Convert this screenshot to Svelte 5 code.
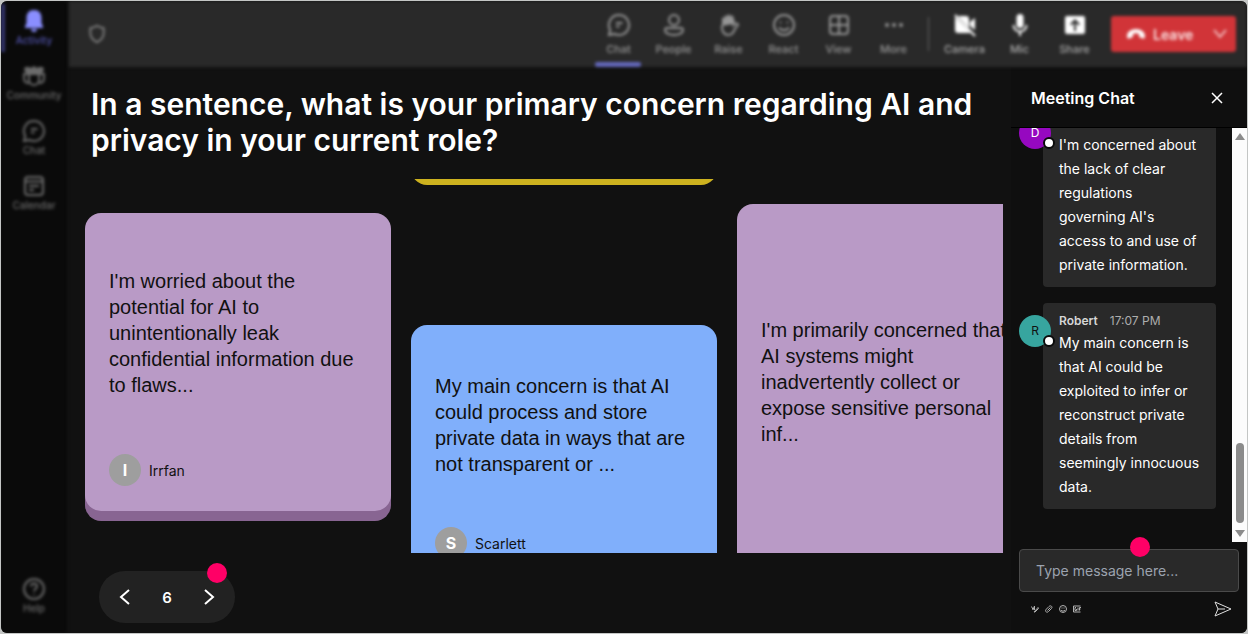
<script>
  let page = 6;
  let draft = "";

  const railItems = [
    { name: "Activity", icon: "bell" },
    { name: "Community", icon: "community" },
    { name: "Chat", icon: "chat" },
    { name: "Calendar", icon: "calendar" },
  ];

  const viewTools = [
    { name: "Chat", icon: "chat" },
    { name: "People", icon: "person" },
    { name: "Raise", icon: "hand" },
    { name: "React", icon: "smile" },
    { name: "View", icon: "grid" },
    { name: "More", icon: "more" },
  ];

  const deviceTools = [
    { name: "Camera", icon: "camera" },
    { name: "Mic", icon: "mic" },
    { name: "Share", icon: "share" },
  ];

  const columns = [
    {
      offset: "low",
      cards: [
        {
          color: "purple",
          size: "medium",
          author: "Irrfan",
          text: "I'm worried about the potential for AI to unintentionally leak confidential information due to flaws...",
        },
      ],
    },
    {
      offset: "scrolled",
      cards: [
        { color: "yellow", size: "medium", author: "", text: "" },
        {
          color: "blue",
          size: "small",
          author: "Scarlett",
          text: "My main concern is that AI could process and store private data in ways that are not transparent or ...",
        },
      ],
    },
    {
      offset: "high",
      cards: [
        {
          color: "purple",
          size: "large",
          author: "",
          text: "I'm primarily concerned that AI systems might inadvertently collect or expose sensitive personal inf...",
        },
      ],
    },
  ];

  const messages = [
    {
      initial: "D",
      color: "violet",
      name: "",
      time: "",
      text: "I'm concerned about the lack of clear regulations governing AI's access to and use of private information.",
    },
    {
      initial: "R",
      color: "teal",
      name: "Robert",
      time: "17:07 PM",
      text: "My main concern is that AI could be exploited to infer or reconstruct private details from seemingly innocuous data.",
    },
  ];
</script>

{#snippet icon(name)}
  <svg class="icon" viewBox="0 0 24 24" aria-hidden="true">
    {#if name === "bell"}
      <path class="solid" d="M12 1c-5 0-7.500 3.500-7.500 8v5L3 17.500v1.500h18v-1.500L19.500 14V9c0-4.500-2.500-8-7.500-8z" />
      <path class="solid" d="M9 20h6a3 3 0 0 1-6 0z" />
    {:else if name === "community"}
      <path class="solid" d="M3 3h4l2 1 3-2 3 2 2-1h4l1 3-2 3H4L2 6z" />
      <path d="M7 10h10v6a5 5 0 0 1-10 0zM7 10H2v4c0 4 2 5 5 5M17 10h5v4c0 4-2 5-5 5" />
    {:else if name === "chat"}
      <path d="M12 2a10 10 0 1 1-4.500 18.900L2 22l1.200-5A10 10 0 0 1 12 2z" />
      <path d="M9 10h6.500M9 13.500h3.500" />
    {:else if name === "calendar"}
      <rect x="3" y="3" width="18" height="18" rx="3" />
      <path d="M3 7.500h18M7 12h10M7 16h5" />
    {:else if name === "person"}
      <circle cx="12" cy="7" r="5" />
      <path d="M5 15h14c1.500 0 2 1 2 2 0 3-4 5-9 5s-9-2-9-5c0-1 .500-2 2-2z" />
    {:else if name === "hand"}
      <path class="solid" d="M5 13V6c0-2 2-2 2.500 0V4c0-2 2.500-2 3 0V3c0-2 2.500-2 3 0v1c.500-2 3-2 3 0v7z" />
      <path d="M5 12v3c0 4 3 7 6 7 4 0 5-2 7-6l3-4c0-2-3-2-4.500 0V6" />
    {:else if name === "smile"}
      <circle cx="12" cy="12" r="10" />
      <path d="M7 14.500c2 3.500 8 3.500 10 0" />
      <circle class="solid" cx="8.500" cy="9.500" r="1" />
      <circle class="solid" cx="15.500" cy="9.500" r="1" />
    {:else if name === "grid"}
      <rect x="3" y="3" width="18" height="18" rx="3" />
      <path d="M12 3v18M3 12h18" />
    {:else if name === "more"}
      <circle class="solid" cx="5" cy="12" r="2" />
      <circle class="solid" cx="12" cy="12" r="2" />
      <circle class="solid" cx="19" cy="12" r="2" />
    {:else if name === "camera"}
      <path class="solid" d="M5 3h8a3 3 0 0 1 3 3v9zM2 4l16 16H5a3 3 0 0 1-3-3zM17 9l5-4v12l-5-4z" />
      <path d="M2 2l20 21" />
    {:else if name === "mic"}
      <rect class="solid" x="8.500" y="1" width="7" height="14" rx="3.500" />
      <path d="M5.500 12a6.500 6.500 0 0 0 13 0M12 18.500V23" />
    {:else if name === "share"}
      <path class="solid" fill-rule="evenodd" d="M4 3h16a2 2 0 0 1 2 2v14a2 2 0 0 1-2 2H4a2 2 0 0 1-2-2V5a2 2 0 0 1 2-2zM12 6l-5 5 1.500 1.500L11 10v8h2v-8l2.500 2.500L17 11z" />
    {:else if name === "help"}
      <circle cx="12" cy="12" r="10" />
      <path d="M9 9.500c0-4 6-4 6 0 0 2-3 2.500-3 5M12 17v1" />
    {:else if name === "shield"}
      <path d="M12 2c3 2 5 2.500 8 3v6c0 5-3 8-8 11-5-3-8-6-8-11V5c3-.500 5-1 8-3z" />
    {/if}
  </svg>
{/snippet}

<div class="app">
  <nav class="rail" aria-label="Apps">
    {#each railItems as item, index}
      <button class="rail-item" class:current={index === 0}>
        {@render icon(item.icon)}
        {item.name}
      </button>
    {/each}
    <button class="rail-item help">
      {@render icon("help")}
      Help
    </button>
  </nav>

  <div class="workspace">
    <header class="topbar">
      <div class="shield">{@render icon("shield")}</div>
      {#each viewTools as tool, index}
        <button class="tool" class:selected={index === 0}>
          {@render icon(tool.icon)}
          {tool.name}
        </button>
      {/each}
      <span class="divider"></span>
      {#each deviceTools as tool}
        <button class="tool device">
          {@render icon(tool.icon)}
          {tool.name}
        </button>
      {/each}
      <button class="leave">
        <svg width="20" height="12" viewBox="0 0 20 12" aria-hidden="true">
          <path fill="#fff" d="M1 8c0-4 4-7 9-7s9 3 9 7c0 2-1 3-2 2.500l-3-1c-1-.500-1-1-1-3.500-2-1-4-1-6 0 0 2.500 0 3-1 3.500l-3 1C2 11 1 10 1 8z" />
        </svg>
        <span>Leave</span>
        <svg width="14" height="10" viewBox="0 0 14 10" aria-hidden="true">
          <path fill="none" stroke="#f0b4b6" stroke-width="2" d="M1 1l6 7 6-7" />
        </svg>
      </button>
    </header>

    <div class="content">
      <main class="stage">
        <h1>
          In a sentence, what is your primary concern regarding AI and privacy
          in your current role?
        </h1>

        <div class="board">
          {#each columns as column}
            <div class="column {column.offset}">
              {#each column.cards as card}
                <article class="card {card.color}">
                  <p class="answer {card.size}">{card.text}</p>
                  <div class="author">
                    {#if card.author}
                      <span class="initial">{card.author[0]}</span>
                      {card.author}
                    {/if}
                  </div>
                </article>
              {/each}
            </div>
          {/each}
        </div>

        <div class="pager">
          <button aria-label="Previous" on:click={() => (page -= 1)}>
            <svg width="12" height="18" viewBox="0 0 12 18"><path d="M10 2L2 9l8 7" /></svg>
          </button>
          <span>{page}</span>
          <button aria-label="Next" on:click={() => (page += 1)}>
            <svg width="12" height="18" viewBox="0 0 12 18"><path d="M2 2l8 7-8 7" /></svg>
          </button>
          <i class="hotspot"></i>
        </div>
      </main>

      <aside class="chat">
        <div class="chat-header">
          <h2>Meeting Chat</h2>
          <button class="plain" aria-label="Close chat">
            <svg width="12" height="12" viewBox="0 0 12 12">
              <path fill="none" stroke="#fff" stroke-width="1.500" d="M1 1l10 10M11 1L1 11" />
            </svg>
          </button>
        </div>

        <div class="log">
          <div class="messages">
            {#each messages as message}
              <div class="message">
                <span class="avatar {message.color}">
                  {message.initial}
                  <i class="presence"></i>
                </span>
                <div class="bubble">
                  <div class="meta"><b>{message.name}</b>{message.time}</div>
                  <p>{message.text}</p>
                </div>
              </div>
            {/each}
          </div>
          <div class="scrollbar">
            <svg width="10" height="7" viewBox="0 0 10 7"><path fill="#8b8b8b" d="M5 0l5 7H0z" /></svg>
            <span class="thumb"></span>
            <svg width="10" height="7" viewBox="0 0 10 7"><path fill="#8b8b8b" d="M5 7l5-7H0z" /></svg>
          </div>
        </div>

        <form class="composer" on:submit|preventDefault={() => (draft = "")}>
          <input
            type="text"
            aria-label="Message"
            placeholder="Type message here..."
            bind:value={draft}
          />
          <i class="hotspot"></i>
          <div class="actions">
            <button type="button" class="plain" aria-label="Format">
              <svg width="8" height="8" viewBox="0 0 16 16"><path d="M1 3l3 6 3-7v8M2 8h5M6 14l8-9 1 2-8 8" /></svg>
            </button>
            <button type="button" class="plain" aria-label="Attach">
              <svg width="8" height="8" viewBox="0 0 16 16"><path d="M5 11l6-6M3 14c-3-1-2-4 0-6l5-5c3-3 8 0 5 4l-6 6c-1 1-3 2-4 1z" /></svg>
            </button>
            <button type="button" class="plain" aria-label="Emoji">
              <svg width="8" height="8" viewBox="0 0 16 16"><circle cx="8" cy="8" r="7" /><path d="M4 10c2 3 6 3 8 0M5 6h2M9 6h2" /></svg>
            </button>
            <button type="button" class="plain" aria-label="GIF">
              <svg width="8" height="8" viewBox="0 0 16 16"><path d="M15 2H1v12h14M6 5H4v6h3V8M10 5v6M13 11V5h3M13 8h2" /></svg>
            </button>
            <button type="submit" class="plain send" aria-label="Send">
              <svg width="18" height="16" viewBox="0 0 18 16"><path d="M1 1l16 7-16 7 3-7zM4 8h7" /></svg>
            </button>
          </div>
        </form>
      </aside>
    </div>
  </div>
</div>

<style>
  :global(body) {
    background: #c4c6c5;
    font-family: Inter, sans-serif;
  }

  .app {
    display: flex;
    box-sizing: border-box;
    height: calc(100vh - 2px);
    margin: 1px;
    border-radius: 6px;
    overflow: hidden;
    background: #111;
    color: #fff;
  }

  button {
    padding: 0;
    border: none;
    background: none;
    color: inherit;
    font-family: inherit;
    cursor: pointer;
  }

  .icon {
    display: block;
    width: 24px;
    height: 24px;
    fill: none;
    stroke: currentColor;
    stroke-width: 2;
  }

  .icon .solid {
    fill: currentColor;
    stroke: none;
  }

  /* two passes, softer than one but not as heavy as 2px */
  .rail,
  .topbar {
    filter: blur(1px) blur(1px);
  }

  .rail {
    flex: none;
    display: flex;
    flex-direction: column;
    gap: 7px;
    box-sizing: border-box;
    width: 66px;
    padding: 3px 0 13px;
    background: #0a0a0a;
  }

  .rail-item {
    display: flex;
    flex-direction: column;
    align-items: center;
    box-sizing: border-box;
    height: 48px;
    padding-top: 5px;
    color: #6c6c6c;
    font-size: 10px;
    font-weight: 500;
    line-height: 14px;
  }

  .rail-item.current {
    border-left: 4px solid #34356e;
    padding-right: 4px;
    color: #5254ae;
  }

  .rail-item.current .icon {
    color: #8a8eff;
  }

  .rail-item.help {
    margin-top: auto;
  }

  .workspace {
    flex: 1;
    display: flex;
    flex-direction: column;
    min-width: 0;
  }

  .topbar {
    flex: none;
    display: flex;
    align-items: center;
    box-sizing: border-box;
    height: 66px;
    margin-left: 2px;
    padding: 0 11px 0 18px;
    background: #292929;
  }

  .shield {
    margin-right: auto;
    color: #8a8a8a;
  }

  .shield .icon {
    width: 20px;
    height: 20px;
  }

  .tool {
    display: flex;
    flex-direction: column;
    align-items: center;
    gap: 5px;
    position: relative;
    width: 55px;
    height: 100%;
    padding-top: 12px;
    color: #969696;
    font-size: 11px;
    font-weight: 500;
    line-height: 14px;
  }

  .tool.device {
    color: #aaa;
  }

  .tool.device .icon {
    color: #fff;
  }

  .tool.selected::after {
    content: "";
    position: absolute;
    left: 4px;
    right: 5px;
    bottom: 0;
    height: 5px;
    border-radius: 2px;
    background: #6468bb;
  }

  .divider {
    width: 1px;
    height: 34px;
    margin: 0 8px 0 7px;
    background: #606060;
  }

  .leave {
    display: flex;
    align-items: center;
    gap: 7px;
    width: 125px;
    height: 36px;
    margin-left: 9px;
    padding: 0 9px 0 15px;
    border-radius: 3px;
    background: #d13438;
    color: #fbe4e4;
    font-size: 14px;
    font-weight: 600;
  }

  .leave span {
    flex: 1;
    text-align: left;
  }

  .content {
    flex: 1;
    display: flex;
    min-height: 0;
  }

  .stage {
    flex: 1;
    display: flex;
    flex-direction: column;
    min-width: 0;
    padding: 19px 8px 10px 18px;
  }

  h1 {
    margin: 0 0 21px 6px;
    font-size: 30px;
    font-weight: 600;
    line-height: 36px;
  }

  .board {
    flex: 1;
    display: flex;
    gap: 20px;
    min-height: 0;
    overflow: hidden;
  }

  .column {
    flex: none;
    display: flex;
    flex-direction: column;
    gap: 140px;
    width: 306px;
  }

  .column.low {
    margin-top: 34px;
  }

  .column.high {
    margin-top: 25px;
  }

  /* the first card of this column is scrolled almost out of view */
  .column.scrolled {
    margin-top: -302px;
  }

  .card {
    flex: none;
    padding: 0 24px 25px;
    border-radius: 16px;
    margin-bottom: 10px;
    color: #111;
  }

  .purple {
    background: #b99ac6;
    box-shadow: 0 10px #886592;
  }

  .yellow {
    background: #fbe04a;
    box-shadow: 0 10px #cdb21f;
  }

  .blue {
    background: #80affb;
    box-shadow: 0 10px #4d7cc8;
  }

  .answer {
    display: flex;
    align-items: center;
    box-sizing: border-box;
    margin: 0;
    padding-bottom: 2px;
    font-family: "Liberation Sans", Arial, sans-serif;
    font-size: 20px;
    line-height: 26px;
  }

  .answer.small {
    height: 202px;
  }

  .answer.medium {
    height: 241px;
  }

  .answer.large {
    height: 358px;
  }

  .author {
    display: flex;
    align-items: center;
    gap: 8px;
    height: 32px;
    font-size: 14px;
  }

  .initial {
    width: 32px;
    border-radius: 50%;
    background: #9e9e9e;
    color: #fff;
    font-size: 16px;
    font-weight: 700;
    line-height: 32px;
    text-align: center;
  }

  .pager {
    align-self: flex-start;
    display: flex;
    align-items: center;
    position: relative;
    box-sizing: border-box;
    width: 136px;
    height: 52px;
    margin: 18px 0 0 14px;
    padding: 0 10px;
    border-radius: 26px;
    background: #222;
    font-size: 15px;
    font-weight: 600;
  }

  .pager button {
    width: 32px;
    height: 32px;
  }

  .pager span {
    flex: 1;
    text-align: center;
  }

  .pager svg {
    display: block;
    margin: auto;
    fill: none;
    stroke: #fff;
    stroke-width: 2;
  }

  .hotspot {
    position: absolute;
    width: 20px;
    height: 20px;
    border-radius: 50%;
    background: #ff0066;
  }

  .pager .hotspot {
    top: -8px;
    right: 8px;
  }

  .chat {
    flex: none;
    display: flex;
    flex-direction: column;
    width: 236px;
    background: #0f0f0f;
  }

  .chat-header {
    display: flex;
    align-items: center;
    justify-content: space-between;
    height: 61px;
    padding: 2px 24px 0 20px;
    box-sizing: border-box;
    border-bottom: 1px solid #000;
  }

  h2 {
    margin: 0;
    font-size: 16px;
    font-weight: 600;
    line-height: 20px;
  }

  .plain {
    display: flex;
  }

  .log {
    flex: 1;
    display: flex;
    min-height: 0;
  }

  .messages {
    flex: 1;
    display: flex;
    flex-direction: column;
    justify-content: flex-end;
    gap: 16px;
    min-width: 0;
    padding: 0 16px 33px 8px;
    overflow: hidden;
  }

  .message {
    flex: none;
    display: flex;
    align-items: flex-start;
  }

  .avatar {
    flex: none;
    position: relative;
    width: 32px;
    margin: 12px -8px 0 0;
    border-radius: 50%;
    font-size: 12px;
    line-height: 32px;
    text-align: center;
  }

  .avatar.violet {
    background: #9608c0;
  }

  .avatar.teal {
    background: #37a59f;
    color: #111;
  }

  .presence {
    position: absolute;
    right: -4px;
    bottom: 0;
    width: 8px;
    height: 8px;
    border: 2px solid #0a0a0a;
    border-radius: 50%;
    background: #fff;
  }

  .bubble {
    flex: 1;
    min-width: 0;
    padding: 10px 16px;
    border-radius: 4px;
    background: #292929;
  }

  .meta {
    display: flex;
    gap: 12px;
    height: 16px;
    margin-bottom: 2px;
    color: #adadad;
    font-size: 12px;
    line-height: 16px;
  }

  .meta b {
    color: #d6d6d6;
    font-weight: 600;
  }

  .bubble p {
    margin: 0;
    font-size: 14px;
    line-height: 24px;
  }

  .scrollbar {
    display: flex;
    flex-direction: column;
    align-items: center;
    box-sizing: border-box;
    width: 15px;
    padding: 5px 0;
    background: #fcfcfc;
  }

  .thumb {
    width: 8px;
    height: 80px;
    margin: auto 0 7px;
    border-radius: 4px;
    background: #8b8b8b;
  }

  .composer {
    position: relative;
    padding: 7px 8px 16px;
  }

  .composer input {
    display: block;
    box-sizing: border-box;
    width: 100%;
    height: 43px;
    padding: 0 16px;
    border: 1px solid #4a4a4a;
    border-radius: 4px;
    background: #292929;
    color: #fff;
    font-family: inherit;
    font-size: 14px;
  }

  .composer input::placeholder {
    color: #9ca3af;
  }

  .composer .hotspot {
    top: -5px;
    left: 119px;
  }

  .actions {
    display: flex;
    align-items: center;
    gap: 6px;
    margin-top: 9px;
    padding: 0 7px 0 12px;
  }

  .actions svg {
    fill: none;
    stroke: #b0b0b0;
    stroke-width: 2;
  }

  .actions .send {
    margin-left: auto;
  }

  .actions .send svg {
    stroke: #e0e0e0;
    stroke-width: 1;
  }
</style>
